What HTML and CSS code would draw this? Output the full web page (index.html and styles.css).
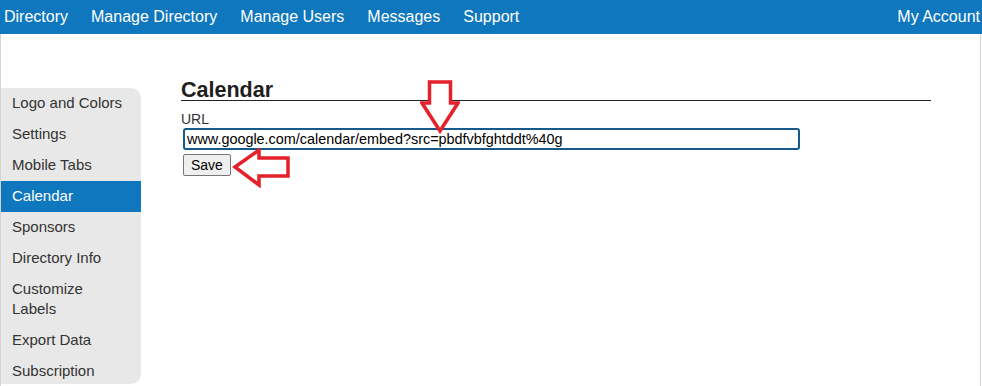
FILE: index.html
```html
<!DOCTYPE html>
<html lang="en">
<head>
    <meta charset="UTF-8">
    <title>Calendar</title>
    <link rel="stylesheet" href="styles.css">
</head>
<body>

<nav class="topnav">
    <a href="#">Directory</a>
    <a href="#">Manage Directory</a>
    <a href="#">Manage Users</a>
    <a href="#">Messages</a>
    <a href="#">Support</a>
    <a href="#" class="account">My Account</a>
</nav>

<div class="page">
    <div class="sidebar">
        <a href="#">Logo and Colors</a>
        <a href="#">Settings</a>
        <a href="#">Mobile Tabs</a>
        <a href="#" class="active">Calendar</a>
        <a href="#">Sponsors</a>
        <a href="#">Directory Info</a>
        <a href="#">Customize Labels</a>
        <a href="#">Export Data</a>
        <a href="#">Subscription</a>
    </div>

    <div class="main">
        <h2>Calendar</h2>
        <label for="calUrl">URL</label>
        <input type="text" id="calUrl" value="www.google.com/calendar/embed?src=pbdfvbfghtddt%40g">
        <button class="save-btn">Save</button>

        <svg class="arrow arrow-down" width="40" height="54" viewBox="0 0 40 54">
            <polygon points="9.5,2 30.5,2 30.5,23 38,23 20,51 2,23 9.5,23" fill="#fff" stroke="#e5202a" stroke-width="3.5" stroke-linejoin="miter"/>
        </svg>
        <svg class="arrow arrow-left" width="60" height="40" viewBox="0 0 60 40">
            <polygon points="3,19 27,2 27,10 56,10 56,28 27,28 27,37" fill="#fff" stroke="#e5202a" stroke-width="3.5" stroke-linejoin="miter"/>
        </svg>
    </div>
</div>

</body>
</html>
```

FILE: styles.css
```css
body {
    font-family: "Liberation Sans", Arial, sans-serif;
    margin: 0;
    padding: 0;
    background-color: white;
    color: #333;
}
.topnav {
    display: flex;
    background-color: #0f77bd;
    height: 34px;
    padding: 0 2px 0 4px;
    gap: 23px;
}
.topnav a {
    color: white;
    text-decoration: none;
    font-size: 16px;
    line-height: 34px;
}
.topnav .account {
    margin-left: auto;
}
.page {
    display: flex;
    align-items: flex-start;
    gap: 40px;
    height: 352px;
    margin-right: 1px;
    border-left: 1px solid #d4d4d4;
    border-right: 1px solid #d4d4d4;
}
.sidebar {
    width: 140px;
    margin-top: 54px;
    background-color: #e8e8e8;
    border-radius: 0 10px 10px 0;
    overflow: hidden;
}
.sidebar a {
    display: block;
    padding: 5px 14px 6px 11px;
    line-height: 20px;
    font-size: 15px;
    color: #333;
    text-decoration: none;
}
.sidebar a:last-child {
    padding-bottom: 3px;
}
.sidebar a.active {
    background-color: #0f77bd;
    color: white;
}
.main {
    position: relative;
    width: 750px;
    padding-top: 46px;
}
.main h2 {
    margin: 0;
    font-size: 21.5px;
    line-height: 20px;
    color: #1e1e1e;
    border-bottom: 1px solid #222;
}
.main label {
    display: block;
    margin-top: 10px;
    font-size: 14px;
    line-height: 17px;
    color: #333;
}
.main input {
    display: block;
    box-sizing: border-box;
    width: 617px;
    height: 22px;
    margin: 0 0 0 2px;
    padding: 0 2px;
    border: 2px solid #155a8a;
    border-radius: 3px;
    font-family: "Liberation Sans", Arial, sans-serif;
    font-size: 14.4px;
    color: #000;
    outline: none;
}
.save-btn {
    display: block;
    box-sizing: border-box;
    height: 22px;
    margin: 4px 0 0 2px;
    padding: 0 7px;
    background-color: #efefef;
    border: 1px solid #767676;
    border-radius: 2px;
    font-family: "Liberation Sans", Arial, sans-serif;
    font-size: 14px;
    color: #000;
}
.arrow {
    position: absolute;
}
.arrow-down {
    left: 239px;
    top: 46px;
}
.arrow-left {
    left: 51px;
    top: 114px;
}
```
